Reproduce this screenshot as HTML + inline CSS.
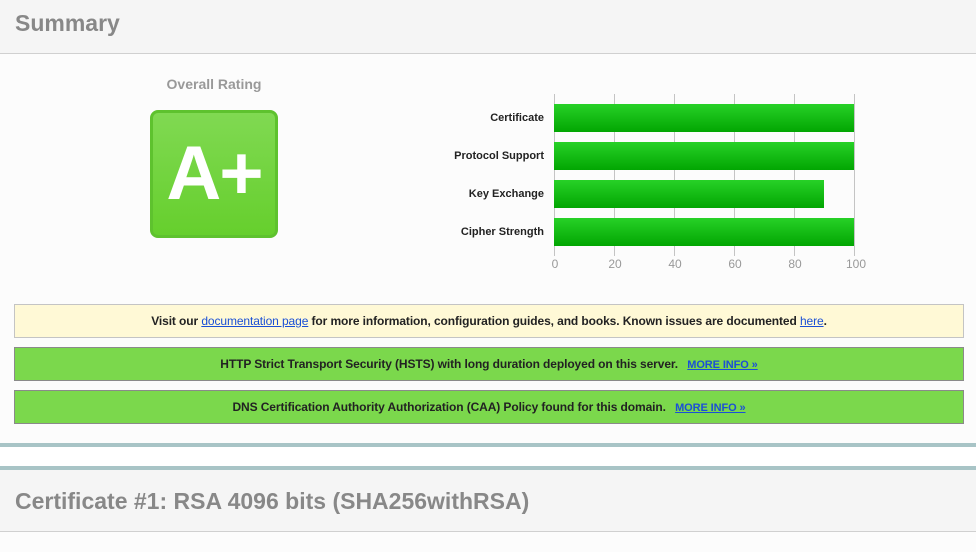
<!DOCTYPE html>
<html><head><meta charset="utf-8"><style>
*{margin:0;padding:0;box-sizing:border-box}
body{width:976px;height:552px;overflow:hidden;background:#fcfcfc;font-family:"Liberation Sans",Arial,sans-serif;position:relative}
.hdr{position:absolute;left:0;width:976px;background:#f5f5f5;border-bottom:1px solid #d0d0d0;color:#888;font-weight:bold;font-size:23px;padding-left:15px}
.abs{position:absolute}
.lbl{position:absolute;right:432px;font-size:11px;font-weight:bold;color:#222;text-align:right;white-space:nowrap}
.bar{position:absolute;left:554px;height:28px;background:linear-gradient(#27d127,#02a602)}
.grid{position:absolute;top:94px;height:162px;width:1px;background:#c4c4c4}
.ax{position:absolute;top:257px;font-size:12px;color:#999;width:40px;text-align:center}
.box{position:absolute;left:14px;width:950px;height:34px;font-size:12px;font-weight:bold;color:#222;text-align:center;line-height:32px;letter-spacing:-0.1px}
a{color:#1a4fd6;text-decoration:underline;font-weight:normal}
.mi{font-size:11px;font-weight:bold;margin-left:6px}
</style></head><body>
<div class="hdr" style="top:0;height:54px;line-height:46px">Summary</div>
<div class="abs" style="left:150px;top:76px;width:128px;text-align:center;font-size:14px;font-weight:bold;color:#999">Overall Rating</div>
<div class="abs" style="left:150px;top:110px;width:128px;height:128px;border-radius:8px;border:3px solid #5ec22e;background:linear-gradient(#80d952,#66cf2d);color:#fff;font-weight:bold;font-size:76px;line-height:122px;text-align:center;letter-spacing:-2px">A+</div>
<div class="grid" style="left:554px"></div><div class="grid" style="left:614px"></div><div class="grid" style="left:674px"></div><div class="grid" style="left:734px"></div><div class="grid" style="left:794px"></div><div class="grid" style="left:854px"></div>
<div class="bar" style="top:104px;width:300px"></div>
<div class="bar" style="top:142px;width:300px"></div>
<div class="bar" style="top:180px;width:270px"></div>
<div class="bar" style="top:218px;width:300px"></div>
<div class="lbl" style="top:112px">Certificate</div>
<div class="lbl" style="top:150px">Protocol Support</div>
<div class="lbl" style="top:188px">Key Exchange</div>
<div class="lbl" style="top:226px">Cipher Strength</div>
<div class="ax" style="left:535px">0</div><div class="ax" style="left:595px">20</div><div class="ax" style="left:655px">40</div><div class="ax" style="left:715px">60</div><div class="ax" style="left:775px">80</div><div class="ax" style="left:836px">100</div>
<div class="box" style="top:304px;background:#fff9d6;border:1px solid #c4c4c4">Visit our <a>documentation page</a> for more information, configuration guides, and books. Known issues are documented <a>here</a>.</div>
<div class="box" style="top:347px;background:#7bd84c;border:1px solid #8a8a8a">HTTP Strict Transport Security (HSTS) with long duration deployed on this server. <a class="mi">MORE INFO »</a></div>
<div class="box" style="top:390px;background:#7bd84c;border:1px solid #8a8a8a">DNS Certification Authority Authorization (CAA) Policy found for this domain. <a class="mi">MORE INFO »</a></div>
<div class="abs" style="left:0;top:443px;width:976px;height:4px;background:#a8c4c6"></div>
<div class="abs" style="left:0;top:447px;width:976px;height:19px;background:#fff"></div>
<div class="abs" style="left:0;top:466px;width:976px;height:4px;background:#a8c4c6"></div>
<div class="hdr" style="top:470px;height:62px;line-height:62px">Certificate #1: RSA 4096 bits (SHA256withRSA)</div>
</body></html>
